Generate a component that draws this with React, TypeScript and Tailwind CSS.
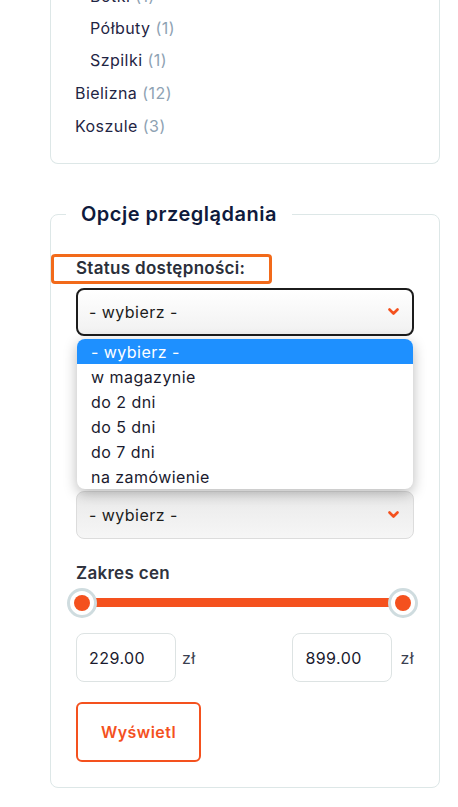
import React from "react";

const font = { fontFamily: "Inter, 'Noto Sans', sans-serif" };

function Chevron() {
  return (
    <svg width="11" height="8" viewBox="0 0 11 8" fill="none">
      <path d="M1.5 1.5 L5.5 5.5 L9.5 1.5" stroke="#f4511e" strokeWidth="2.6" strokeLinecap="round" strokeLinejoin="round" />
    </svg>
  );
}

function Handle({ className }: { className: string }) {
  return (
    <div className={`absolute top-0 flex h-[30px] w-[30px] items-center justify-center rounded-full border-[3px] border-[#cfdcdf] bg-white ${className}`}>
      <div className="h-[16px] w-[16px] rounded-full bg-[#f4511e]" />
    </div>
  );
}

const categories = [
  { name: "Botki", count: 1, sub: true },
  { name: "Półbuty", count: 1, sub: true },
  { name: "Szpilki", count: 1, sub: true },
  { name: "Bielizna", count: 12, sub: false },
  { name: "Koszule", count: 3, sub: false },
];

const options = ["- wybierz -", "w magazynie", "do 2 dni", "do 5 dni", "do 7 dni", "na zamówienie"];

export default function App() {
  return (
    <div className="h-[807px] w-[458px] overflow-hidden bg-white text-[16px] tracking-[0.45px] text-[#1f2544]" style={font}>
      {/* Categories card */}
      <div className="ml-[50px] w-[390px] rounded-b-lg border border-t-0 border-[#dde7e7]">
        <div className="-mt-[20px] pb-[21px]">
          {categories.map((c) => (
            <div key={c.name} className={`flex h-[32px] items-center ${c.sub ? "pl-[39px]" : "pl-[24px] mt-[1px]"}`}>
              <span>{c.name}</span>
              <span className="ml-[5px] text-[#8ea2b3]">({c.count})</span>
            </div>
          ))}
        </div>
      </div>

      {/* Browsing options */}
      <fieldset className="relative ml-[50px] mt-[38px] w-[390px] rounded-lg border border-[#dde7e7] pb-[25px]">
        <legend className="ml-[15px] px-[15px] text-[20px] font-semibold leading-[24px] tracking-[0.5px] text-[#0f1a3c]">
          Opcje przeglądania
        </legend>

        <div className="mt-[28px] flex h-[30px] w-[221px] items-center rounded-[4px] border-[3px] border-[#f26a1a] pl-[22px] text-[17px] font-semibold tracking-[0.3px] text-[#2a2f3a]">
          Status dostępności:
        </div>

        <div className="mx-[25px] mt-[4px] flex h-[48px] items-center justify-between rounded-[8px] border-2 border-[#1c1c1c] bg-gradient-to-b from-white to-[#f1f1f1] pl-[11px] pr-[13px] text-[#1c1c1c]">
          <span>- wybierz -</span>
          <Chevron />
        </div>

        {/* open options list */}
        <div className="absolute left-[26px] top-[113px] z-10 w-[336px] overflow-hidden rounded-[8px] bg-white shadow-[0_4px_14px_rgba(0,0,0,0.28)]">
          {options.map((o, i) => (
            <div
              key={o}
              className={`flex h-[25px] items-center pl-[14px] ${i === 0 ? "bg-[#1e90ff] text-white" : "text-[#1a1a2e]"}`}
            >
              {o}
            </div>
          ))}
        </div>

        <div className="mx-[25px] mt-[155px] flex h-[48px] items-center justify-between rounded-[8px] border border-[#dcdcdc] bg-gradient-to-b from-[#e9e9e9] to-[#f6f6f6] pl-[12px] pr-[14px] text-[#1c1c1c]">
          <span>- wybierz -</span>
          <Chevron />
        </div>

        <div className="ml-[25px] mt-[24px] h-[20px] text-[17px] font-semibold leading-[20px] tracking-[0.3px] text-[#2f333d]">Zakres cen</div>

        <div className="relative ml-[16px] mt-[5px] h-[30px] w-[351px]">
          <div className="absolute left-[15px] right-[15px] top-[10px] h-[9px] bg-[#f4511e]" />
          <Handle className="left-0" />
          <Handle className="right-0" />
        </div>

        <div className="mx-[25px] mt-[15px] flex items-center justify-between">
          <div className="flex items-center">
            <div className="flex h-[49px] w-[100px] items-center rounded-[8px] border border-[#dde3e3] pl-[12px] text-[#1a1a2e]">229.00</div>
            <span className="ml-[6px] text-[#3a4050]">zł</span>
          </div>
          <div className="flex items-center">
            <div className="flex h-[49px] w-[100px] items-center rounded-[8px] border border-[#dde3e3] pl-[12px] text-[#1a1a2e]">899.00</div>
            <span className="ml-[8px] text-[#3a4050]">zł</span>
          </div>
        </div>

        <button className="ml-[25px] mt-[20px] flex h-[60px] w-[125px] items-center justify-center rounded-[6px] border-2 border-[#f4511e] font-semibold text-[#f4511e]">
          Wyświetl
        </button>
      </fieldset>
    </div>
  );
}
